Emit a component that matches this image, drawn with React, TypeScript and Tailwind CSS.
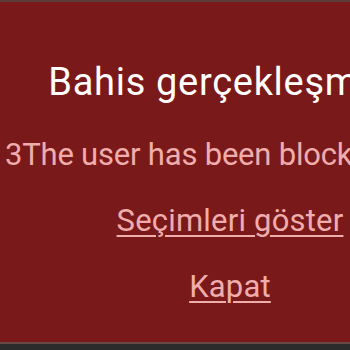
export default function App() {
  return (
    <div className="h-[350px] w-[350px] overflow-hidden bg-[#2b2b2b] font-['Roboto',sans-serif]">
      <div className="h-[2px] w-full bg-[#5c3b3b]" />
      <div className="relative h-[340px] w-full overflow-hidden bg-[#7a1919]">
        <div className="flex w-[460px] flex-col items-center pt-[56px]">
          <h1 className="whitespace-nowrap text-[38px] leading-[48px] tracking-[0.7px] text-white">
            Bahis gerçekleşmedi
          </h1>
          <p className="mt-[31px] self-start whitespace-nowrap pl-[5px] text-[31px] leading-[36px] tracking-[-0.2px] text-[#f0adad]">
            3The user has been blocked
          </p>
          <a className="mt-[30px] whitespace-nowrap text-[31px] leading-[36px] tracking-[0.2px] text-[#f0adad] underline decoration-2 underline-offset-4">
            Seçimleri göster
          </a>
          <a className="mt-[30px] whitespace-nowrap text-[31px] leading-[36px] tracking-[0.2px] text-[#f0adad] underline decoration-2 underline-offset-4">
            Kapat
          </a>
        </div>
      </div>
      <div className="h-[2px] w-full bg-[#6b4848]" />
    </div>
  );
}
